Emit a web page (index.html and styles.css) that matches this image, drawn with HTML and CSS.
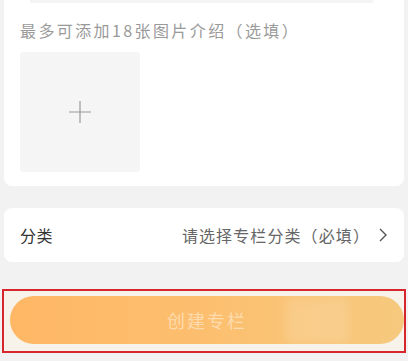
FILE: index.html
```html
<!DOCTYPE html>
<html lang="zh">
<head>
<meta charset="utf-8">
<link rel="stylesheet" href="styles.css">
</head>
<body>
<div class="page">
  <section class="card card-photos">
    <div class="input-tail"></div>
    <p class="hint">最多可添加18张图片介绍（选填）</p>
    <div class="upload">
      <svg width="24" height="24" viewBox="0 0 24 24"><path d="M12 1v22M1 12h22" stroke="#9a9a9a" stroke-width="1.2" fill="none"/></svg>
    </div>
  </section>
  <section class="card card-row">
    <span class="label">分类</span>
    <span class="value">请选择专栏分类（必填）<svg class="chev" width="10" height="16" viewBox="0 0 10 16"><path d="M2 2l6 6-6 6" stroke="#555" stroke-width="1.4" fill="none"/></svg></span>
  </section>
  <div class="focus-box">
    <button class="create">创建专栏</button>
    <span class="glare"></span>
  </div>
</div>
</body>
</html>
```
FILE: styles.css
```css
* { box-sizing: border-box; }
html, body { margin: 0; padding: 0; }
body {
  background: #f2f2f2;
  font-family: "Noto Sans CJK SC", "Noto Sans", sans-serif;
  width: 408px;
  height: 361px;
  overflow: hidden;
}
.page {
  display: flex;
  flex-direction: column;
}
.card {
  background: #fff;
  margin: 0 4px;
  border-radius: 8px;
}
.card-photos {
  border-radius: 0 0 8px 8px;
  height: 186px;
  padding: 0 16px;
  display: flex;
  flex-direction: column;
}
.input-tail {
  height: 3px;
  margin: 0 15px 0 10px;
  background: #f4f4f4;
}
.hint {
  margin: 10px 0 0 0;
  font-size: 16px;
  line-height: 34px;
  letter-spacing: 2.4px;
  color: #9a9a9a;
}
.upload {
  margin-top: 5px;
  width: 120px;
  height: 120px;
  background: #f5f5f5;
  border-radius: 4px;
  display: flex;
  align-items: center;
  justify-content: center;
}
.card-row {
  margin-top: 22px;
  height: 54px;
  padding: 0 16px;
  display: flex;
  align-items: center;
  justify-content: space-between;
  font-size: 16px;
}
.label { color: #333; letter-spacing: 0.5px; }
.value {
  color: #666;
  letter-spacing: 1.1px;
  display: flex;
  align-items: center;
  gap: 8px;
}
.focus-box {
  position: relative;
  margin: 27px 2px 0 2px;
  height: 64px;
  border: 2px solid #d7262e;
  padding: 5px 0 5px 6px;
  background: #f7f3ea;
}
.create {
  display: block;
  width: 100%;
  height: 48px;
  border: none;
  border-radius: 24px;
  background: linear-gradient(90deg, #ffb765 0%, #fcbf6f 50%, #f6c97e 100%);
  color: rgba(255, 255, 255, 0.45);
  font-family: "Noto Sans CJK SC", sans-serif;
  font-size: 18px;
  letter-spacing: 2px;
  padding: 0;
}
.glare {
  position: absolute;
  left: 281px;
  top: 7px;
  width: 64px;
  height: 46px;
  background: rgba(255, 255, 255, 0.14);
  filter: blur(5px);
  border-radius: 6px;
}
```
